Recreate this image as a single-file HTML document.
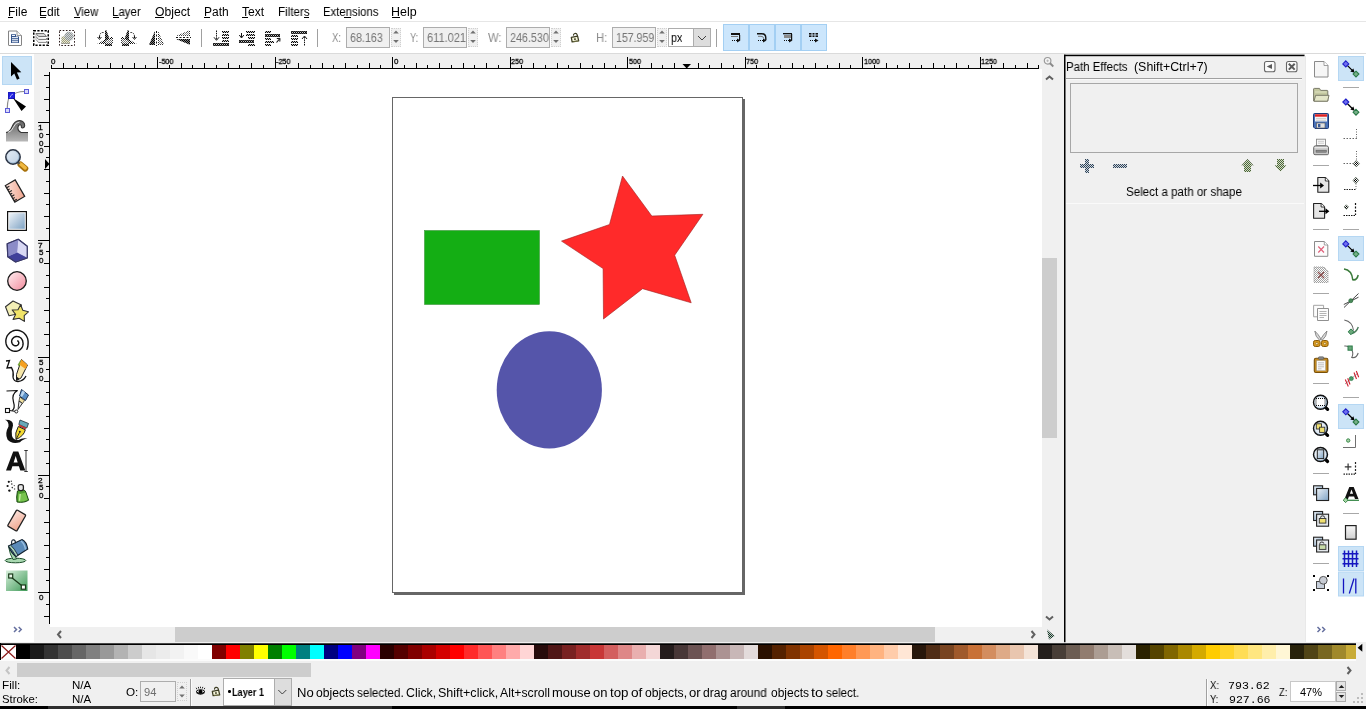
<!DOCTYPE html>
<html><head><meta charset="utf-8"><title>Inkscape</title><style>
html,body{margin:0;padding:0;}
body{width:1366px;height:709px;overflow:hidden;position:relative;background:#f0f0f0;font-family:"Liberation Sans",sans-serif;font-size:12px;color:#000;}
.a{position:absolute;box-sizing:border-box;}
.t{position:absolute;white-space:pre;display:inline-block;transform-origin:0 0;will-change:transform;}
u{text-decoration:none;border-bottom:1px solid #000;padding-bottom:0px;}
svg{position:absolute;left:0;top:0;}
</style></head>
<body>
<div class="a " style="left:0px;top:0px;width:1366px;height:54px;background:#ffffff;"></div>
<div class="a " style="left:0px;top:21px;width:1366px;height:1px;background:#e6e6e6;"></div>
<div class="a " style="left:0px;top:53px;width:1366px;height:1px;background:#dadada;"></div>
<div class="a " style="left:8px;top:17px;width:5px;height:1px;background:#000;"></div>
<div class="a " style="left:40px;top:17px;width:6px;height:1px;background:#000;"></div>
<div class="a " style="left:74px;top:17px;width:6px;height:1px;background:#000;"></div>
<div class="a " style="left:113px;top:17px;width:6px;height:1px;background:#000;"></div>
<div class="a " style="left:155px;top:17px;width:9px;height:1px;background:#000;"></div>
<div class="a " style="left:204px;top:17px;width:6px;height:1px;background:#000;"></div>
<div class="a " style="left:242px;top:17px;width:6px;height:1px;background:#000;"></div>
<div class="a " style="left:304px;top:17px;width:5px;height:1px;background:#000;"></div>
<div class="a " style="left:344px;top:17px;width:7px;height:1px;background:#000;"></div>
<div class="a " style="left:392px;top:17px;width:8px;height:1px;background:#000;"></div>
<div class="a " style="left:85px;top:29px;width:1px;height:18px;background:#a0a0a0;"></div>
<div class="a " style="left:201px;top:29px;width:1px;height:18px;background:#a0a0a0;"></div>
<div class="a " style="left:317px;top:29px;width:1px;height:18px;background:#a0a0a0;"></div>
<div class="a " style="left:716px;top:29px;width:1px;height:18px;background:#a0a0a0;"></div>
<div class="a " style="left:346px;top:27px;width:44px;height:21px;background:#f0f0f0;border:1px solid #adadad;"></div>
<div class="a " style="left:391px;top:28px;width:10px;height:19px;background:#f0f0f0;border:1px dotted #d0d0d0;"></div>
<div class="a " style="left:423px;top:27px;width:44px;height:21px;background:#f0f0f0;border:1px solid #adadad;"></div>
<div class="a " style="left:468px;top:28px;width:10px;height:19px;background:#f0f0f0;border:1px dotted #d0d0d0;"></div>
<div class="a " style="left:506px;top:27px;width:44px;height:21px;background:#f0f0f0;border:1px solid #adadad;"></div>
<div class="a " style="left:551px;top:28px;width:10px;height:19px;background:#f0f0f0;border:1px dotted #d0d0d0;"></div>
<div class="a " style="left:612px;top:27px;width:44px;height:21px;background:#f0f0f0;border:1px solid #adadad;"></div>
<div class="a " style="left:657px;top:28px;width:10px;height:19px;background:#f0f0f0;border:1px dotted #d0d0d0;"></div>
<div class="a " style="left:668px;top:28px;width:43px;height:19px;background:#fff;border:1px solid #adadad;"></div>
<div class="a " style="left:693px;top:28px;width:18px;height:19px;background:#dddddd;border:1px solid #adadad;"></div>
<div class="a " style="left:723px;top:24px;width:26px;height:27px;background:#cce6fc;border:1px solid #a3cff3;"></div>
<div class="a " style="left:749px;top:24px;width:26px;height:27px;background:#cce6fc;border:1px solid #a3cff3;"></div>
<div class="a " style="left:775px;top:24px;width:26px;height:27px;background:#cce6fc;border:1px solid #a3cff3;"></div>
<div class="a " style="left:801px;top:24px;width:26px;height:27px;background:#cce6fc;border:1px solid #a3cff3;"></div>
<div class="a " style="left:0px;top:54px;width:34px;height:588px;background:#ffffff;"></div>
<div class="a " style="left:2px;top:56px;width:30px;height:29px;background:#cce4f7;border:1px solid #b5d7f3;"></div>
<div class="a " style="left:50px;top:69px;width:992px;height:558px;background:#ffffff;"></div>
<div class="a " style="left:394px;top:99px;width:351px;height:496px;background:#666;"></div>
<div class="a " style="left:392px;top:97px;width:351px;height:496px;background:#ffffff;border:1px solid #666;"></div>
<div class="a " style="left:175px;top:627px;width:760px;height:15px;background:#cdcdcd;"></div>
<div class="a " style="left:1042px;top:258px;width:15px;height:180px;background:#cdcdcd;"></div>
<div class="a " style="left:1066px;top:78px;width:236px;height:1px;background:#a0a0a0;"></div>
<div class="a " style="left:1066px;top:79px;width:236px;height:1px;background:#fafafa;"></div>
<div class="a " style="left:1070px;top:83px;width:228px;height:70px;background:#f0f0f0;border:1px solid #a7a7a7;"></div>
<div class="a " style="left:1066px;top:203px;width:238px;height:1px;background:#fafafa;"></div>
<div class="a " style="left:1305px;top:54px;width:61px;height:588px;background:#ffffff;"></div>
<div class="a " style="left:1305px;top:56px;width:1px;height:586px;background:#e9e9e9;"></div>
<div class="a " style="left:0px;top:643px;width:1356px;height:2px;background:#f0f0f0;"></div>
<div class="a " style="left:16px;top:645px;width:1340px;height:14px;background:linear-gradient(to right,#000000 0px 14px,#1a1a1a 14px 28px,#333333 28px 42px,#4d4d4d 42px 56px,#666666 56px 70px,#808080 70px 84px,#999999 84px 98px,#b3b3b3 98px 112px,#cccccc 112px 126px,#e6e6e6 126px 140px,#ececec 140px 154px,#f2f2f2 154px 168px,#f9f9f9 168px 182px,#ffffff 182px 196px,#800000 196px 210px,#ff0000 210px 224px,#808000 224px 238px,#ffff00 238px 252px,#008000 252px 266px,#00ff00 266px 280px,#008080 280px 294px,#00ffff 294px 308px,#000080 308px 322px,#0000ff 322px 336px,#800080 336px 350px,#ff00ff 350px 364px,#2b0000 364px 378px,#550000 378px 392px,#800000 392px 406px,#aa0000 406px 420px,#d40000 420px 434px,#ff0000 434px 448px,#ff2a2a 448px 462px,#ff5555 462px 476px,#ff8080 476px 490px,#ffaaaa 490px 504px,#ffd5d5 504px 518px,#280b0b 518px 532px,#501616 532px 546px,#782121 546px 560px,#a02c2c 560px 574px,#c83737 574px 588px,#d35f5f 588px 602px,#de8787 602px 616px,#e9afaf 616px 630px,#f4d7d7 630px 644px,#241c1c 644px 658px,#483737 658px 672px,#6c5353 672px 686px,#916f6f 686px 700px,#ac9393 700px 714px,#c8b7b7 714px 728px,#e3dbdb 728px 742px,#2b1100 742px 756px,#552200 756px 770px,#803300 770px 784px,#aa4400 784px 798px,#d45500 798px 812px,#ff6600 812px 826px,#ff7f2a 826px 840px,#ff9955 840px 854px,#ffb380 854px 868px,#ffccaa 868px 882px,#ffe6d5 882px 896px,#28170b 896px 910px,#502d16 910px 924px,#784421 924px 938px,#a05a2c 938px 952px,#c87137 952px 966px,#d38d5f 966px 980px,#deaa87 980px 994px,#e9c6af 994px 1008px,#f4e3d7 1008px 1022px,#241f1c 1022px 1036px,#483e37 1036px 1050px,#6c5d53 1050px 1064px,#917c6f 1064px 1078px,#ac9d93 1078px 1092px,#c8beb7 1092px 1106px,#e3dedb 1106px 1120px,#2b2200 1120px 1134px,#554400 1134px 1148px,#806600 1148px 1162px,#aa8800 1162px 1176px,#d4aa00 1176px 1190px,#ffcc00 1190px 1204px,#ffd42a 1204px 1218px,#ffdd55 1218px 1232px,#ffe680 1232px 1246px,#ffeeaa 1246px 1260px,#fff6d5 1260px 1274px,#28220b 1274px 1288px,#504416 1288px 1302px,#786721 1302px 1316px,#a0892c 1316px 1330px,#c8ab37 1330px 1340px);"></div>
<div class="a " style="left:0px;top:659px;width:1356px;height:2px;background:#fbfbfb;"></div>
<div class="a " style="left:1px;top:645px;width:15px;height:14px;background:#ffffff;"></div>
<div class="a " style="left:0px;top:643px;width:1px;height:17px;background:#000;"></div>
<div class="a " style="left:17px;top:663px;width:294px;height:14px;background:#cdcdcd;"></div>
<div class="a " style="left:140px;top:681px;width:36px;height:21px;background:#f0f0f0;border:1px solid #adadad;"></div>
<div class="a " style="left:177px;top:682px;width:10px;height:19px;background:#f0f0f0;border:1px dotted #d0d0d0;"></div>
<div class="a " style="left:190px;top:679px;width:1px;height:27px;background:#a0a0a0;"></div>
<div class="a " style="left:191px;top:679px;width:1px;height:27px;background:#fcfcfc;"></div>
<div class="a " style="left:223px;top:678px;width:69px;height:28px;background:#fff;border:1px solid #adadad;"></div>
<div class="a " style="left:274px;top:678px;width:18px;height:28px;background:#dddddd;border:1px solid #adadad;"></div>
<div class="a " style="left:228px;top:690px;width:3px;height:3px;background:#000;border-radius:1.2px;"></div>
<div class="a " style="left:1206px;top:679px;width:1px;height:27px;background:#a0a0a0;"></div>
<div class="a " style="left:1207px;top:679px;width:1px;height:27px;background:#fcfcfc;"></div>
<div class="a " style="left:1290px;top:681px;width:46px;height:21px;background:#fff;border:1px solid #c8c8c8;"></div>
<div class="a " style="left:1336px;top:681px;width:10px;height:10px;background:#e4e4e4;border:1px solid #adadad;"></div>
<div class="a " style="left:1336px;top:692px;width:10px;height:10px;background:#e4e4e4;border:1px solid #adadad;"></div>
<div class="a " style="left:0px;top:706px;width:1366px;height:3px;background:#000;"></div>
<div class="a " style="left:48px;top:706px;width:344px;height:3px;background:#2e2e2e;"></div>
<div class="a " style="left:737px;top:706px;width:48px;height:3px;background:#2e2e2e;"></div>
<span class="t" style="left:7.51px;top:4.34px;line-height:16px;font-size:12px;color:#000;transform:scaleX(0.9854);">File</span>
<span class="t" style="left:39.41px;top:4.34px;line-height:16px;font-size:12px;color:#000;transform:scaleX(0.9927);">Edit</span>
<span class="t" style="left:74.40px;top:4.34px;line-height:16px;font-size:12px;color:#000;transform:scaleX(0.9370);">View</span>
<span class="t" style="left:112.34px;top:4.34px;line-height:16px;font-size:12px;color:#000;transform:scaleX(0.9578);">Layer</span>
<span class="t" style="left:154.89px;top:4.34px;line-height:16px;font-size:12px;color:#000;transform:scaleX(1.0132);">Object</span>
<span class="t" style="left:203.60px;top:4.34px;line-height:16px;font-size:12px;color:#000;transform:scaleX(0.9951);">Path</span>
<span class="t" style="left:242.00px;top:4.34px;line-height:16px;font-size:12px;color:#000;transform:scaleX(1.0058);">Text</span>
<span class="t" style="left:278.03px;top:4.34px;line-height:16px;font-size:12px;color:#000;transform:scaleX(0.9660);">Filters</span>
<span class="t" style="left:322.85px;top:4.34px;line-height:16px;font-size:12px;color:#000;transform:scaleX(0.9443);">Extensions</span>
<span class="t" style="left:391.47px;top:4.34px;line-height:16px;font-size:12px;color:#000;transform:scaleX(1.0384);">Help</span>
<span class="t" style="left:332.24px;top:30.14px;line-height:16px;font-size:12px;color:#8c8c8c;transform:scaleX(0.7918);">X:</span>
<span class="t" style="left:349.86px;top:30.14px;line-height:16px;font-size:12px;color:#757575;transform:scaleX(0.8953);">68.163</span>
<span class="t" style="left:409.85px;top:30.14px;line-height:16px;font-size:12px;color:#8c8c8c;transform:scaleX(0.7732);">Y:</span>
<span class="t" style="left:426.65px;top:30.14px;line-height:16px;font-size:12px;color:#757575;transform:scaleX(0.9174);">611.021</span>
<span class="t" style="left:487.50px;top:30.14px;line-height:16px;font-size:12px;color:#8c8c8c;transform:scaleX(0.9396);">W:</span>
<span class="t" style="left:510.06px;top:30.14px;line-height:16px;font-size:12px;color:#757575;transform:scaleX(0.8962);">246.530</span>
<span class="t" style="left:595.86px;top:30.14px;line-height:16px;font-size:12px;color:#8c8c8c;transform:scaleX(0.9338);">H:</span>
<span class="t" style="left:616.11px;top:30.14px;line-height:16px;font-size:12px;color:#757575;transform:scaleX(0.8809);">157.959</span>
<span class="t" style="left:671.48px;top:30.14px;line-height:16px;font-size:12px;color:#000;transform:scaleX(0.8843);">px</span>
<span class="t" style="left:1066.44px;top:59.24px;line-height:16px;font-size:12px;color:#000;transform:scaleX(0.9544);">Path Effects</span>
<span class="t" style="left:1134.08px;top:59.24px;line-height:16px;font-size:12px;color:#000;transform:scaleX(1.0320);">(Shift+Ctrl+7)</span>
<span class="t" style="left:1125.82px;top:183.54px;line-height:16px;font-size:12px;color:#000;transform:scaleX(0.9647);">Select a path or shape</span>
<span class="t" style="left:1.94px;top:678.39px;line-height:15px;font-size:11px;color:#000;transform:scaleX(1.0688);">Fill:</span>
<span class="t" style="left:2.38px;top:692.49px;line-height:15px;font-size:11px;color:#000;transform:scaleX(1.0302);">Stroke:</span>
<span class="t" style="left:71.56px;top:678.39px;line-height:15px;font-size:11px;color:#000;transform:scaleX(1.0457);">N/A</span>
<span class="t" style="left:71.56px;top:692.49px;line-height:15px;font-size:11px;color:#000;transform:scaleX(1.0457);">N/A</span>
<span class="t" style="left:126.07px;top:684.99px;line-height:15px;font-size:11px;color:#000;transform:scaleX(1.0634);">O:</span>
<span class="t" style="left:143.79px;top:684.99px;line-height:15px;font-size:11px;color:#6d6d6d;transform:scaleX(1.0160);">94</span>
<span class="t" style="left:232.25px;top:685.63px;line-height:14px;font-size:10px;color:#000;transform:scaleX(0.9133);font-weight:bold;">Layer 1</span>
<span class="t" style="left:296.92px;top:684.54px;line-height:16px;font-size:12px;color:#000;transform:scaleX(1.0884);">No</span>
<span class="t" style="left:315.99px;top:684.54px;line-height:16px;font-size:12px;color:#000;transform:scaleX(1.0129);">objects</span>
<span class="t" style="left:357.21px;top:684.54px;line-height:16px;font-size:12px;color:#000;transform:scaleX(0.9723);">selected.</span>
<span class="t" style="left:405.68px;top:684.54px;line-height:16px;font-size:12px;color:#000;transform:scaleX(1.0290);">Click,</span>
<span class="t" style="left:437.68px;top:684.54px;line-height:16px;font-size:12px;color:#000;transform:scaleX(1.0436);">Shift+click,</span>
<span class="t" style="left:500.20px;top:684.54px;line-height:16px;font-size:12px;color:#000;transform:scaleX(1.0197);">Alt+scroll</span>
<span class="t" style="left:552.05px;top:684.54px;line-height:16px;font-size:12px;color:#000;transform:scaleX(1.0762);">mouse</span>
<span class="t" style="left:593.16px;top:684.54px;line-height:16px;font-size:12px;color:#000;transform:scaleX(1.0850);">on</span>
<span class="t" style="left:610.09px;top:684.54px;line-height:16px;font-size:12px;color:#000;transform:scaleX(1.1113);">top</span>
<span class="t" style="left:630.93px;top:684.54px;line-height:16px;font-size:12px;color:#000;transform:scaleX(1.1385);">of</span>
<span class="t" style="left:645.29px;top:684.54px;line-height:16px;font-size:12px;color:#000;transform:scaleX(1.0170);">objects,</span>
<span class="t" style="left:689.15px;top:684.54px;line-height:16px;font-size:12px;color:#000;transform:scaleX(1.0929);">or</span>
<span class="t" style="left:703.49px;top:684.54px;line-height:16px;font-size:12px;color:#000;transform:scaleX(1.0113);">drag</span>
<span class="t" style="left:729.81px;top:684.54px;line-height:16px;font-size:12px;color:#000;transform:scaleX(0.9836);">around</span>
<span class="t" style="left:771.11px;top:684.54px;line-height:16px;font-size:12px;color:#000;transform:scaleX(0.9886);">objects</span>
<span class="t" style="left:811.08px;top:684.54px;line-height:16px;font-size:12px;color:#000;transform:scaleX(1.2084);">to</span>
<span class="t" style="left:826.01px;top:684.54px;line-height:16px;font-size:12px;color:#000;transform:scaleX(0.9566);">select.</span>
<span class="t" style="left:1210.11px;top:679.03px;line-height:14px;font-size:10px;color:#000;transform:scaleX(0.9439);">X:</span>
<span class="t" style="left:1210.11px;top:692.93px;line-height:14px;font-size:10px;color:#000;transform:scaleX(0.9337);">Y:</span>
<span class="t" style="left:1228.39px;top:680.03px;line-height:14px;font-size:10px;color:#000;transform:scaleX(1.1588);font-family:'Liberation Mono';">793.62</span>
<span class="t" style="left:1228.51px;top:693.74px;line-height:14px;font-size:10px;color:#000;transform:scaleX(1.1521);font-family:'Liberation Mono';">927.66</span>
<span class="t" style="left:1279.34px;top:684.99px;line-height:15px;font-size:11px;color:#000;transform:scaleX(0.8569);">Z:</span>
<span class="t" style="left:1299.70px;top:684.99px;line-height:15px;font-size:11px;color:#000;transform:scaleX(0.9797);">47%</span>
<span class="t" style="left:158.93px;top:56.23px;line-height:12px;font-size:8px;color:#000;transform:scaleX(0.9054);-webkit-text-stroke:0.3px #000;">-500</span>
<span class="t" style="left:276.43px;top:56.23px;line-height:12px;font-size:8px;color:#000;transform:scaleX(0.9054);-webkit-text-stroke:0.3px #000;">-250</span>
<span class="t" style="left:393.91px;top:56.23px;line-height:12px;font-size:8px;color:#000;transform:scaleX(0.9744);-webkit-text-stroke:0.3px #000;">0</span>
<span class="t" style="left:511.34px;top:56.23px;line-height:12px;font-size:8px;color:#000;transform:scaleX(0.8977);-webkit-text-stroke:0.3px #000;">250</span>
<span class="t" style="left:628.93px;top:56.23px;line-height:12px;font-size:8px;color:#000;transform:scaleX(0.8907);-webkit-text-stroke:0.3px #000;">500</span>
<span class="t" style="left:746.34px;top:56.23px;line-height:12px;font-size:8px;color:#000;transform:scaleX(0.8977);-webkit-text-stroke:0.3px #000;">750</span>
<span class="t" style="left:863.66px;top:56.23px;line-height:12px;font-size:8px;color:#000;transform:scaleX(0.8969);-webkit-text-stroke:0.3px #000;">1000</span>
<span class="t" style="left:981.16px;top:56.23px;line-height:12px;font-size:8px;color:#000;transform:scaleX(0.8969);-webkit-text-stroke:0.3px #000;">1250</span>
<span class="t" style="left:51.21px;top:56.23px;line-height:12px;font-size:8px;color:#000;transform:scaleX(0.9744);-webkit-text-stroke:0.3px #000;">0</span>
<span class="t" style="left:38.15px;top:122.03px;line-height:12px;font-size:8px;color:#000;transform:scaleX(1.0857);-webkit-text-stroke:0.3px #000;">1</span>
<span class="t" style="left:38.51px;top:129.83px;line-height:12px;font-size:8px;color:#000;transform:scaleX(0.9744);-webkit-text-stroke:0.3px #000;">0</span>
<span class="t" style="left:38.51px;top:137.63px;line-height:12px;font-size:8px;color:#000;transform:scaleX(0.9744);-webkit-text-stroke:0.3px #000;">0</span>
<span class="t" style="left:38.51px;top:145.43px;line-height:12px;font-size:8px;color:#000;transform:scaleX(0.9744);-webkit-text-stroke:0.3px #000;">0</span>
<span class="t" style="left:38.39px;top:239.53px;line-height:12px;font-size:8px;color:#000;transform:scaleX(1.0270);-webkit-text-stroke:0.3px #000;">7</span>
<span class="t" style="left:38.51px;top:247.33px;line-height:12px;font-size:8px;color:#000;transform:scaleX(0.9744);-webkit-text-stroke:0.3px #000;">5</span>
<span class="t" style="left:38.51px;top:255.13px;line-height:12px;font-size:8px;color:#000;transform:scaleX(0.9744);-webkit-text-stroke:0.3px #000;">0</span>
<span class="t" style="left:38.51px;top:357.03px;line-height:12px;font-size:8px;color:#000;transform:scaleX(0.9744);-webkit-text-stroke:0.3px #000;">5</span>
<span class="t" style="left:38.51px;top:364.83px;line-height:12px;font-size:8px;color:#000;transform:scaleX(0.9744);-webkit-text-stroke:0.3px #000;">0</span>
<span class="t" style="left:38.51px;top:372.63px;line-height:12px;font-size:8px;color:#000;transform:scaleX(0.9744);-webkit-text-stroke:0.3px #000;">0</span>
<span class="t" style="left:38.39px;top:474.53px;line-height:12px;font-size:8px;color:#000;transform:scaleX(1.0270);-webkit-text-stroke:0.3px #000;">2</span>
<span class="t" style="left:38.51px;top:482.33px;line-height:12px;font-size:8px;color:#000;transform:scaleX(0.9744);-webkit-text-stroke:0.3px #000;">5</span>
<span class="t" style="left:38.51px;top:490.13px;line-height:12px;font-size:8px;color:#000;transform:scaleX(0.9744);-webkit-text-stroke:0.3px #000;">0</span>
<span class="t" style="left:38.51px;top:592.03px;line-height:12px;font-size:8px;color:#000;transform:scaleX(0.9744);-webkit-text-stroke:0.3px #000;">0</span>
<svg width="1366" height="709" viewBox="0 0 1366 709">
<defs><pattern id="d" width="2" height="2" patternUnits="userSpaceOnUse"><rect x="0" y="0" width="1" height="1" fill="#000"/><rect x="1" y="1" width="1" height="1" fill="#000"/></pattern>
<pattern id="dg" width="2" height="2" patternUnits="userSpaceOnUse"><rect x="0" y="0" width="1" height="1" fill="#7a7a7a"/><rect x="1" y="1" width="1" height="1" fill="#7a7a7a"/></pattern>
<pattern id="dy" width="2" height="2" patternUnits="userSpaceOnUse"><rect x="0" y="0" width="1" height="1" fill="#6a6a50"/><rect x="1" y="1" width="1" height="1" fill="#6a6a50"/></pattern>
<pattern id="dgr" width="2" height="2" patternUnits="userSpaceOnUse"><rect x="0" y="0" width="1" height="1" fill="#5a8040"/><rect x="1" y="1" width="1" height="1" fill="#5a8040"/></pattern>
<pattern id="dbl" width="2" height="2" patternUnits="userSpaceOnUse"><rect x="0" y="0" width="1" height="1" fill="#30506e"/><rect x="1" y="1" width="1" height="1" fill="#30506e"/></pattern>
<linearGradient id="gBlue" x1="0" y1="0" x2="1" y2="1"><stop offset="0" stop-color="#eef3f8"/><stop offset="1" stop-color="#7fa3c4"/></linearGradient>
<linearGradient id="gPink" x1="0" y1="0" x2="1" y2="1"><stop offset="0" stop-color="#fff0f2"/><stop offset="1" stop-color="#f28a9c"/></linearGradient>
<linearGradient id="gGray" x1="0" y1="0" x2="0" y2="1"><stop offset="0" stop-color="#f8f8f8"/><stop offset="1" stop-color="#d0d0d0"/></linearGradient>
<linearGradient id="gGreen" x1="0" y1="0" x2="1" y2="1"><stop offset="0" stop-color="#d8efdc"/><stop offset="1" stop-color="#3f9a58"/></linearGradient>
<linearGradient id="gSalmon" x1="0" y1="0" x2="1" y2="1"><stop offset="0" stop-color="#fbe3dc"/><stop offset="1" stop-color="#f0a48c"/></linearGradient>
<linearGradient id="gWave" x1="0" y1="0" x2="0" y2="1"><stop offset="0" stop-color="#606060"/><stop offset="1" stop-color="#b8b8b8"/></linearGradient>
<linearGradient id="gGold" x1="0" y1="0" x2="1" y2="0"><stop offset="0" stop-color="#f5c860"/><stop offset="1" stop-color="#c88a10"/></linearGradient>
</defs>
<rect x="424.5" y="230.5" width="115" height="74" fill="#14ae14" stroke="#2d8a2d" stroke-width="0.5"/>
<polygon points="622.5,176 651.8,216 702.9,214.3 674.7,255.2 691.2,302.8 642.6,288.7 603.5,319 603.1,268.6 561.5,241.1 609.5,224.5" fill="#ff2a2a" stroke="#a02020" stroke-width="0.6"/>
<ellipse cx="549.3" cy="389.9" rx="52.6" ry="58.6" fill="#5555aa"/>
<rect x="51" y="68" width="988" height="1" fill="#000"/><rect x="51" y="65" width="1" height="3" fill="#000"/><rect x="63" y="63" width="1" height="5" fill="#000"/><rect x="75" y="65" width="1" height="3" fill="#000"/><rect x="87" y="63" width="1" height="5" fill="#000"/><rect x="98" y="65" width="1" height="3" fill="#000"/><rect x="110" y="63" width="1" height="5" fill="#000"/><rect x="122" y="65" width="1" height="3" fill="#000"/><rect x="134" y="63" width="1" height="5" fill="#000"/><rect x="145" y="65" width="1" height="3" fill="#000"/><rect x="157" y="57" width="1" height="11" fill="#000"/><rect x="169" y="65" width="1" height="3" fill="#000"/><rect x="181" y="63" width="1" height="5" fill="#000"/><rect x="192" y="65" width="1" height="3" fill="#000"/><rect x="204" y="63" width="1" height="5" fill="#000"/><rect x="216" y="65" width="1" height="3" fill="#000"/><rect x="228" y="63" width="1" height="5" fill="#000"/><rect x="239" y="65" width="1" height="3" fill="#000"/><rect x="251" y="63" width="1" height="5" fill="#000"/><rect x="263" y="65" width="1" height="3" fill="#000"/><rect x="275" y="57" width="1" height="11" fill="#000"/><rect x="286" y="65" width="1" height="3" fill="#000"/><rect x="298" y="63" width="1" height="5" fill="#000"/><rect x="310" y="65" width="1" height="3" fill="#000"/><rect x="322" y="63" width="1" height="5" fill="#000"/><rect x="333" y="65" width="1" height="3" fill="#000"/><rect x="345" y="63" width="1" height="5" fill="#000"/><rect x="357" y="65" width="1" height="3" fill="#000"/><rect x="369" y="63" width="1" height="5" fill="#000"/><rect x="380" y="65" width="1" height="3" fill="#000"/><rect x="392" y="57" width="1" height="11" fill="#000"/><rect x="404" y="65" width="1" height="3" fill="#000"/><rect x="416" y="63" width="1" height="5" fill="#000"/><rect x="427" y="65" width="1" height="3" fill="#000"/><rect x="439" y="63" width="1" height="5" fill="#000"/><rect x="451" y="65" width="1" height="3" fill="#000"/><rect x="463" y="63" width="1" height="5" fill="#000"/><rect x="474" y="65" width="1" height="3" fill="#000"/><rect x="486" y="63" width="1" height="5" fill="#000"/><rect x="498" y="65" width="1" height="3" fill="#000"/><rect x="510" y="57" width="1" height="11" fill="#000"/><rect x="521" y="65" width="1" height="3" fill="#000"/><rect x="533" y="63" width="1" height="5" fill="#000"/><rect x="545" y="65" width="1" height="3" fill="#000"/><rect x="557" y="63" width="1" height="5" fill="#000"/><rect x="568" y="65" width="1" height="3" fill="#000"/><rect x="580" y="63" width="1" height="5" fill="#000"/><rect x="592" y="65" width="1" height="3" fill="#000"/><rect x="604" y="63" width="1" height="5" fill="#000"/><rect x="615" y="65" width="1" height="3" fill="#000"/><rect x="627" y="57" width="1" height="11" fill="#000"/><rect x="639" y="65" width="1" height="3" fill="#000"/><rect x="651" y="63" width="1" height="5" fill="#000"/><rect x="662" y="65" width="1" height="3" fill="#000"/><rect x="674" y="63" width="1" height="5" fill="#000"/><rect x="686" y="65" width="1" height="3" fill="#000"/><rect x="698" y="63" width="1" height="5" fill="#000"/><rect x="709" y="65" width="1" height="3" fill="#000"/><rect x="721" y="63" width="1" height="5" fill="#000"/><rect x="733" y="65" width="1" height="3" fill="#000"/><rect x="745" y="57" width="1" height="11" fill="#000"/><rect x="756" y="65" width="1" height="3" fill="#000"/><rect x="768" y="63" width="1" height="5" fill="#000"/><rect x="780" y="65" width="1" height="3" fill="#000"/><rect x="792" y="63" width="1" height="5" fill="#000"/><rect x="803" y="65" width="1" height="3" fill="#000"/><rect x="815" y="63" width="1" height="5" fill="#000"/><rect x="827" y="65" width="1" height="3" fill="#000"/><rect x="839" y="63" width="1" height="5" fill="#000"/><rect x="850" y="65" width="1" height="3" fill="#000"/><rect x="862" y="57" width="1" height="11" fill="#000"/><rect x="874" y="65" width="1" height="3" fill="#000"/><rect x="886" y="63" width="1" height="5" fill="#000"/><rect x="897" y="65" width="1" height="3" fill="#000"/><rect x="909" y="63" width="1" height="5" fill="#000"/><rect x="921" y="65" width="1" height="3" fill="#000"/><rect x="933" y="63" width="1" height="5" fill="#000"/><rect x="944" y="65" width="1" height="3" fill="#000"/><rect x="956" y="63" width="1" height="5" fill="#000"/><rect x="968" y="65" width="1" height="3" fill="#000"/><rect x="980" y="57" width="1" height="11" fill="#000"/><rect x="991" y="65" width="1" height="3" fill="#000"/><rect x="1003" y="63" width="1" height="5" fill="#000"/><rect x="1015" y="65" width="1" height="3" fill="#000"/><rect x="1027" y="63" width="1" height="5" fill="#000"/><rect x="1038" y="65" width="1" height="3" fill="#000"/><rect x="49" y="72" width="1" height="552" fill="#000"/><rect x="44" y="75" width="5" height="1" fill="#000"/><rect x="46" y="87" width="3" height="1" fill="#000"/><rect x="44" y="99" width="5" height="1" fill="#000"/><rect x="46" y="110" width="3" height="1" fill="#000"/><rect x="38" y="122" width="11" height="1" fill="#000"/><rect x="46" y="134" width="3" height="1" fill="#000"/><rect x="44" y="146" width="5" height="1" fill="#000"/><rect x="46" y="157" width="3" height="1" fill="#000"/><rect x="44" y="169" width="5" height="1" fill="#000"/><rect x="46" y="181" width="3" height="1" fill="#000"/><rect x="44" y="193" width="5" height="1" fill="#000"/><rect x="46" y="204" width="3" height="1" fill="#000"/><rect x="44" y="216" width="5" height="1" fill="#000"/><rect x="46" y="228" width="3" height="1" fill="#000"/><rect x="38" y="240" width="11" height="1" fill="#000"/><rect x="46" y="251" width="3" height="1" fill="#000"/><rect x="44" y="263" width="5" height="1" fill="#000"/><rect x="46" y="275" width="3" height="1" fill="#000"/><rect x="44" y="287" width="5" height="1" fill="#000"/><rect x="46" y="298" width="3" height="1" fill="#000"/><rect x="44" y="310" width="5" height="1" fill="#000"/><rect x="46" y="322" width="3" height="1" fill="#000"/><rect x="44" y="334" width="5" height="1" fill="#000"/><rect x="46" y="345" width="3" height="1" fill="#000"/><rect x="38" y="357" width="11" height="1" fill="#000"/><rect x="46" y="369" width="3" height="1" fill="#000"/><rect x="44" y="381" width="5" height="1" fill="#000"/><rect x="46" y="392" width="3" height="1" fill="#000"/><rect x="44" y="404" width="5" height="1" fill="#000"/><rect x="46" y="416" width="3" height="1" fill="#000"/><rect x="44" y="428" width="5" height="1" fill="#000"/><rect x="46" y="439" width="3" height="1" fill="#000"/><rect x="44" y="451" width="5" height="1" fill="#000"/><rect x="46" y="463" width="3" height="1" fill="#000"/><rect x="38" y="475" width="11" height="1" fill="#000"/><rect x="46" y="486" width="3" height="1" fill="#000"/><rect x="44" y="498" width="5" height="1" fill="#000"/><rect x="46" y="510" width="3" height="1" fill="#000"/><rect x="44" y="522" width="5" height="1" fill="#000"/><rect x="46" y="533" width="3" height="1" fill="#000"/><rect x="44" y="545" width="5" height="1" fill="#000"/><rect x="46" y="557" width="3" height="1" fill="#000"/><rect x="44" y="569" width="5" height="1" fill="#000"/><rect x="46" y="580" width="3" height="1" fill="#000"/><rect x="38" y="592" width="11" height="1" fill="#000"/><rect x="46" y="604" width="3" height="1" fill="#000"/><rect x="44" y="616" width="5" height="1" fill="#000"/><polygon points="682.5,64 691,64 686.7,68.5" fill="#000"/><polygon points="45,159 45,169 49.5,164" fill="#000"/>
<path d="M61.0,631.0 L58.0,634.5 L61.0,638.0" fill="none" stroke="#606060" stroke-width="2"/>
<path d="M1031.5,631.0 L1034.5,634.5 L1031.5,638.0" fill="none" stroke="#606060" stroke-width="2"/>
<path d="M1046.0,79.5 L1049.5,76.5 L1053.0,79.5" fill="none" stroke="#606060" stroke-width="2"/>
<path d="M1046.0,616.5 L1049.5,619.5 L1053.0,616.5" fill="none" stroke="#606060" stroke-width="2"/>
<path d="M9.5,667.0 L6.5,670.5 L9.5,674.0" fill="none" stroke="#c4c4c4" stroke-width="2"/>
<path d="M1347.5,667.0 L1350.5,670.5 L1347.5,674.0" fill="none" stroke="#606060" stroke-width="2"/>
<path d="M698,36.0 L702,40.0 L706,36.0" fill="none" stroke="#404040" stroke-width="1"/>
<path d="M278.3,690.0 L282.3,694.0 L286.3,690.0" fill="none" stroke="#404040" stroke-width="1"/>
<polygon points="393.2,33.5 398.8,33.5 396,30.5" fill="#707070"/>
<polygon points="393.2,40.0 398.8,40.0 396,43.0" fill="#707070"/>
<polygon points="470.2,33.5 475.8,33.5 473,30.5" fill="#707070"/>
<polygon points="470.2,40.0 475.8,40.0 473,43.0" fill="#707070"/>
<polygon points="553.2,33.5 558.8,33.5 556,30.5" fill="#707070"/>
<polygon points="553.2,40.0 558.8,40.0 556,43.0" fill="#707070"/>
<polygon points="659.2,33.5 664.8,33.5 662,30.5" fill="#707070"/>
<polygon points="659.2,40.0 664.8,40.0 662,43.0" fill="#707070"/>
<polygon points="179.2,688.5 184.8,688.5 182,685.5" fill="#707070"/>
<polygon points="179.2,694.5 184.8,694.5 182,697.5" fill="#707070"/>
<polygon points="1338.7,688.0 1344.3,688.0 1341.5,685.0" fill="#202020"/>
<polygon points="1338.7,695.0 1344.3,695.0 1341.5,698.0" fill="#202020"/>
<path d="M1.5,645.5 L15.5,658.5 M15.5,645.5 L1.5,658.5" stroke="#8b1a1a" stroke-width="1.2" fill="none"/>
<polygon points="1362.3,643.8 1362.3,651.8 1357.6,647.8" fill="#000"/>
<rect x="0" y="643.3" width="1356" height="1.7" fill="#000"/>
<g transform="translate(7,30)" ><path d="M1.5,1 L10,1 L14.5,5.5 L14.5,15 Q14.5,15.5 14,15.5 L2,15.5 Q1.5,15.5 1.5,15 Z" fill="#fdfdfe" stroke="#858585" stroke-width="1"/>
<path d="M10,1 L10,5.5 L14.5,5.5" fill="#f4f4f4" stroke="#858585" stroke-width="0.8"/>
<path d="M4,4.2 L9,4.2 L9,6.4 L12,6.4 L12,13 L4,13 Z" fill="#34548a"/>
<rect x="5" y="5" width="3" height="1" fill="#f4f8ff"/><rect x="5" y="7.1" width="6" height="1.1" fill="#f4f8ff"/><rect x="5" y="9.2" width="6" height="1.1" fill="#f4f8ff"/><rect x="5" y="11.2" width="6" height="1.1" fill="#f4f8ff"/></g>
<g transform="translate(33,30)" ><rect x="0.75" y="0.75" width="14.5" height="14.5" fill="none" stroke="#000" stroke-width="1.5" stroke-dasharray="2.2,1.4"/>
<path d="M3,3.5 L11,3.5 L13.5,6.5 L5.5,6.5 Z" fill="#d8d8d8" stroke="#555" stroke-width="0.8"/>
<path d="M3,6.5 L5.5,9.5 L13.5,9.5 L13.5,8" fill="#eee" stroke="#666" stroke-width="0.8"/>
<path d="M3,9.5 L5.5,12.5 L13.5,12.5 L13.5,11" fill="#eee" stroke="#777" stroke-width="0.8"/>
<path d="M3,3.5 L3,6.5 M3,6.8 L3,9.5" stroke="#888" stroke-width="0.6"/></g>
<g transform="translate(59,30)" ><rect x="0.5" y="0.5" width="15" height="15" fill="none" stroke="#2a1a1a" stroke-width="1" stroke-dasharray="1.6,1.6"/>
<circle cx="10" cy="6.3" r="4.6" fill="url(#dg)"/><circle cx="10" cy="6.3" r="4.6" fill="#a4aeb0" opacity="0.5"/>
<path d="M2.5,7.5 Q2.5,6.5 3.5,6.5 L5.5,6.5 Q6,10.5 11,11 L11,12.5 Q11,13.5 10,13.5 L2.5,13.5 Z" fill="url(#dy)"/>
<path d="M2.5,7.5 Q2.5,6.5 3.5,6.5 L5.5,6.5 Q6,10.5 11,11 L11,12.5 Q11,13.5 10,13.5 L2.5,13.5 Z" fill="#d0d0a8" opacity="0.5"/>
<path d="M2.5,13.5 L11,13.5" stroke="#444" stroke-width="0.8" stroke-dasharray="1,1"/></g>
<g transform="translate(96,30)">
<path d="M9,0.3 L10.3,0.3 L13.3,8.5 L9,11 Z" fill="url(#d)"/><path d="M9,0.3 L10.3,0.3 L13.3,8.5 L9,11 Z" fill="#000" opacity="0.45"/>
<path d="M8,10 L13,8.5 L15.2,6.8 L17,7.5 L17,14 L9,14 L1,13.8 L4.5,12.2 Z" fill="url(#d)"/>
<path d="M9.5,10.5 L16.5,8.5 L16.5,13.5 L9.5,13.5 Z" fill="#fff" opacity="0.45"/>
<rect x="9" y="14" width="7" height="2" fill="url(#d)"/><rect x="9" y="14" width="7" height="2" fill="#000" opacity="0.4"/>
<path d="M7.5,2.5 Q3.5,2.3 3.5,7" fill="none" stroke="#111" stroke-width="1" stroke-dasharray="1.6,1"/>
<path d="M1.2,7 L5.8,7 L3.5,9.8 Z" fill="url(#d)"/><path d="M1.2,7 L5.8,7 L3.5,9.8 Z" fill="#000" opacity="0.4"/></g>
<g transform="translate(138,30) scale(-1,1)">
<path d="M9,0.3 L10.3,0.3 L13.3,8.5 L9,11 Z" fill="url(#d)"/><path d="M9,0.3 L10.3,0.3 L13.3,8.5 L9,11 Z" fill="#000" opacity="0.45"/>
<path d="M8,10 L13,8.5 L15.2,6.8 L17,7.5 L17,14 L9,14 L1,13.8 L4.5,12.2 Z" fill="url(#d)"/>
<path d="M9.5,10.5 L16.5,8.5 L16.5,13.5 L9.5,13.5 Z" fill="#fff" opacity="0.45"/>
<rect x="9" y="14" width="7" height="2" fill="url(#d)"/><rect x="9" y="14" width="7" height="2" fill="#000" opacity="0.4"/>
<path d="M7.5,2.5 Q3.5,2.3 3.5,7" fill="none" stroke="#111" stroke-width="1" stroke-dasharray="1.6,1"/>
<path d="M1.2,7 L5.8,7 L3.5,9.8 Z" fill="url(#d)"/><path d="M1.2,7 L5.8,7 L3.5,9.8 Z" fill="#000" opacity="0.4"/></g>
<path d="M155,31 L155,45 L149,45 Z" fill="url(#d)"/><path d="M155,31 L155,45 L149,45 Z" fill="#000" opacity="0.5"/>
<path d="M158,31 L158,45 L164,45 Z" fill="url(#d)"/><path d="M158.6,34 L158.6,44.4 L162.8,44.4 Z" fill="#fff" opacity="0.55"/>
<path d="M156.5,31 L156.5,46" stroke="#111" stroke-width="1" stroke-dasharray="2,1.5"/>
<path d="M176,36 L190,36 L190,30.3 Z" fill="url(#d)"/><path d="M178.5,35.4 L189.4,35.4 L189.4,31.3 Z" fill="#fff" opacity="0.55"/>
<path d="M176,39 L190,39 L190,44.7 Z" fill="url(#d)"/><path d="M176,39 L190,39 L190,44.7 Z" fill="#000" opacity="0.5"/>
<path d="M176,37.5 L191,37.5" stroke="#111" stroke-width="1" stroke-dasharray="2,1.5"/>
<g transform="translate(213,30)" ><rect x="9" y="1" width="7" height="2" fill="url(#d)"/><rect x="9" y="1" width="7" height="2" fill="#000" opacity="0.22"/><rect x="9" y="4" width="7" height="2" fill="url(#d)"/><rect x="9" y="4" width="7" height="2" fill="#000" opacity="0.22"/><rect x="9" y="7" width="7" height="2" fill="url(#d)"/><rect x="9" y="7" width="7" height="2" fill="#000" opacity="0.22"/><rect x="9" y="10" width="7" height="2" fill="url(#d)"/><rect x="9" y="10" width="7" height="2" fill="#000" opacity="0.22"/><rect x="0" y="13" width="16" height="3" fill="url(#d)"/><rect x="0" y="13" width="16" height="3" fill="#000" opacity="0.2"/><rect x="0.5" y="13.5" width="15" height="2" fill="none" stroke="#222" stroke-width="0.7"/><path d="M3.5,0.5 L3.5,10" stroke="#111" stroke-width="1" stroke-dasharray="1.5,0.8"/><path d="M1,7.3 L3.5,10.3 L6,7.3" fill="none" stroke="#111" stroke-width="1"/></g>
<g transform="translate(239,30)" ><rect x="7" y="1" width="9" height="2" fill="url(#d)"/><rect x="7" y="1" width="9" height="2" fill="#000" opacity="0.22"/><rect x="7" y="4" width="9" height="2" fill="url(#d)"/><rect x="7" y="4" width="9" height="2" fill="#000" opacity="0.22"/><rect x="9" y="7" width="7" height="2" fill="url(#d)"/><rect x="9" y="7" width="7" height="2" fill="#000" opacity="0.22"/><rect x="9" y="14" width="7" height="2" fill="url(#d)"/><rect x="9" y="14" width="7" height="2" fill="#000" opacity="0.22"/><rect x="0" y="10" width="15" height="3" fill="url(#d)"/><rect x="0" y="10" width="15" height="3" fill="#000" opacity="0.2"/><rect x="0.5" y="10.5" width="14" height="2" fill="none" stroke="#222" stroke-width="0.7"/><path d="M2.5,3 L2.5,7.5" stroke="#111" stroke-width="1"/><path d="M0.3,5 L2.5,8 L4.8,5" fill="none" stroke="#111" stroke-width="1"/></g>
<g transform="translate(265,30)" ><rect x="0" y="1" width="6" height="2" fill="url(#d)"/><rect x="0" y="1" width="6" height="2" fill="#000" opacity="0.22"/><rect x="0" y="8" width="6" height="2" fill="url(#d)"/><rect x="0" y="8" width="6" height="2" fill="#000" opacity="0.22"/><rect x="0" y="14" width="6" height="2" fill="url(#d)"/><rect x="0" y="14" width="6" height="2" fill="#000" opacity="0.22"/><rect x="0" y="11" width="9" height="2" fill="url(#d)"/><rect x="0" y="11" width="9" height="2" fill="#000" opacity="0.22"/><rect x="0" y="4" width="15" height="3" fill="url(#d)"/><rect x="0" y="4" width="15" height="3" fill="#000" opacity="0.2"/><rect x="0.5" y="4.5" width="14" height="2" fill="none" stroke="#222" stroke-width="0.7"/><path d="M11.5,12.5 L14.5,9" stroke="#111" stroke-width="1.1"/><path d="M11.8,8.6 L15,8.3 L14.8,11.6" fill="none" stroke="#111" stroke-width="1"/></g>
<g transform="translate(291,30)" ><rect x="0" y="1" width="16" height="3" fill="url(#d)"/><rect x="0" y="1" width="16" height="3" fill="#000" opacity="0.2"/><rect x="0.5" y="1.5" width="15" height="2" fill="none" stroke="#222" stroke-width="0.7"/><rect x="0" y="5" width="7" height="2" fill="url(#d)"/><rect x="0" y="5" width="7" height="2" fill="#000" opacity="0.22"/><rect x="0" y="8" width="7" height="2" fill="url(#d)"/><rect x="0" y="8" width="7" height="2" fill="#000" opacity="0.22"/><rect x="0" y="11" width="7" height="2" fill="url(#d)"/><rect x="0" y="11" width="7" height="2" fill="#000" opacity="0.22"/><rect x="0" y="14" width="7" height="2" fill="url(#d)"/><rect x="0" y="14" width="7" height="2" fill="#000" opacity="0.22"/><path d="M13.5,15.5 L13.5,6" stroke="#111" stroke-width="1" stroke-dasharray="1.5,0.8"/><path d="M11,9 L13.5,6 L16,9" fill="none" stroke="#111" stroke-width="1"/></g>
<g transform="translate(571,33)" ><path d="M0.3,4.4 L6.6,3.2 L7.7,7.9 L1.1,8.8 Z" fill="#f6f6dc" stroke="#3c3c22" stroke-width="1.25" stroke-linejoin="round"/>
<rect x="3.1" y="5.3" width="1.7" height="1.7" fill="#4a4a30"/>
<path d="M2.5,2.7 Q2.2,1 3.8,0.5 Q5.7,0.2 6.2,1.8 L6.5,3.2" fill="none" stroke="#3c3c22" stroke-width="1.15"/>
<path d="M7.5,8 L2,8.8" stroke="#8a8a50" stroke-width="0.6"/></g>
<g transform="translate(212,686.9)" ><path d="M0.3,4.4 L6.6,3.2 L7.7,7.9 L1.1,8.8 Z" fill="#f6f6dc" stroke="#3c3c22" stroke-width="1.25" stroke-linejoin="round"/>
<rect x="3.1" y="5.3" width="1.7" height="1.7" fill="#4a4a30"/>
<path d="M2.5,2.7 Q2.2,1 3.8,0.5 Q5.7,0.2 6.2,1.8 L6.5,3.2" fill="none" stroke="#3c3c22" stroke-width="1.15"/>
<path d="M7.5,8 L2,8.8" stroke="#8a8a50" stroke-width="0.6"/></g>
<g transform="translate(731,33)" ><rect x="0" y="0" width="9" height="2" fill="#111"/><rect x="0" y="3" width="7" height="1" fill="#777"/><rect x="8" y="2" width="1.2" height="5" fill="#111"/><path d="M1,7.5 L6,7.5" stroke="#111" stroke-width="1" stroke-dasharray="1,1"/><path d="M6,5.5 L9.5,7.5 L6,9.5 Z" fill="#111"/></g>
<g transform="translate(757,33)" ><path d="M0,0.8 L5,0.8 Q8.8,0.8 8.8,5 L8.8,7" fill="none" stroke="#111" stroke-width="1.4"/><path d="M1,3.3 L4,3.3 Q6.5,3.3 6.8,5.5" fill="none" stroke="#777" stroke-width="1"/><path d="M1,7.5 L6,7.5" stroke="#111" stroke-width="1" stroke-dasharray="1,1"/><path d="M6,5.5 L9.5,7.5 L6,9.5 Z" fill="#111"/></g>
<g transform="translate(783,33)" ><rect x="0" y="0" width="9" height="1.3" fill="#111"/><rect x="1" y="2" width="7" height="3" fill="#8a8a8a"/><rect x="8" y="1" width="1.2" height="6" fill="#111"/><path d="M1,7.5 L6,7.5" stroke="#111" stroke-width="1" stroke-dasharray="1,1"/><path d="M6,5.5 L9.5,7.5 L6,9.5 Z" fill="#111"/></g>
<g transform="translate(809,33)" ><rect x="0" y="0" width="9" height="4" fill="#111"/><rect x="2.5" y="0" width="1" height="4" fill="#cce4f7"/><rect x="5.5" y="0" width="1" height="4" fill="#cce4f7"/><rect x="0" y="1.6" width="9" height="0.8" fill="#cce4f7"/><path d="M1,7.5 L6,7.5" stroke="#111" stroke-width="1" stroke-dasharray="1,1"/><path d="M6,5.5 L9.5,7.5 L6,9.5 Z" fill="#111"/></g>
<g transform="translate(1042,55)" ><circle cx="5.6" cy="5.8" r="3.3" fill="#f4f4f4" stroke="#9a9a9a" stroke-width="1.2"/><path d="M8,8.3 L11.3,11.5" stroke="#8a8a8a" stroke-width="1.9"/><path d="M4.3,5.8 L6.9,5.8 M5.6,4.5 L5.6,7.1" stroke="#b0b0b0" stroke-width="0.8"/></g>
<g transform="translate(1044,628)" ><path d="M3,1.5 L10.5,8 L5,11.5 Z" fill="url(#d)"/><path d="M3,1.5 L10.5,8 L5,11.5 Z" fill="#4a8a6a" opacity="0.35"/></g>
<path d="M11,62 L11,76.5 L14.3,73.6 L17,79.8 L19.6,78.6 L16.9,72.6 L21.3,72.3 Z" fill="#000"/>
<path d="M7.3,108 Q7.5,97 11.5,95.5 Q16,91.8 24,91.5" fill="none" stroke="#8a8a8a" stroke-width="1.2"/>
<rect x="8.5" y="92.5" width="6" height="6" fill="#2222e0" stroke="#1a1ac0" stroke-width="1"/>
<path d="M10,97.5 Q10.5,95 13,94" fill="none" stroke="#a8a8f0" stroke-width="1"/>
<rect x="24.5" y="89.5" width="4" height="4" fill="#d8d8fa" stroke="#5a5ad8" stroke-width="1"/>
<rect x="5.5" y="108.5" width="4" height="4" fill="#d8d8fa" stroke="#5a5ad8" stroke-width="1"/>
<path d="M13,98 L26,106.5 L21.5,111 Z" fill="#000"/>
<path d="M6,132.5 Q10,132 12,127 Q14.5,120.5 19.5,120.5 Q24.5,121 24.7,125.5 Q24.5,128 22.2,128 Q21,127.5 21.3,125.8 Q20.5,124 18.5,125.5 Q16.5,130 21,132.5 L28,132.5 L28,141.5 L6,141.5 Z" fill="url(#gWave)"/>
<path d="M6,132.5 Q10,132 12,127 Q14.5,120.5 19.5,120.5 Q24.5,121 24.7,125.5 Q24.5,128 22.2,128 Q21,127.5 21.3,125.8 Q20.5,124 18.5,125.5 Q16.5,130 21,132.5 L28,132.5" fill="none" stroke="#333" stroke-width="1.1"/>
<path d="M8,132.3 Q11.5,131.5 13.2,127.5 Q15.5,122 19.5,122" fill="none" stroke="#eee" stroke-width="0.9"/>
<path d="M20.5,164.5 L25.3,168.6" stroke="#a8720c" stroke-width="6" stroke-linecap="round"/>
<path d="M20.6,164 L25.2,167.9" stroke="#f0b840" stroke-width="3.4" stroke-linecap="round"/>
<path d="M17,161.5 L19.5,164" stroke="#555" stroke-width="2.4"/>
<circle cx="13" cy="157" r="7.2" fill="url(#gBlue)" stroke="#2a3344" stroke-width="1.5"/>
<circle cx="13" cy="157" r="5.4" fill="#dfe8f4" opacity="0.65"/>
<g transform="translate(15,191) rotate(-30)"><rect x="-5.7" y="-9.5" width="11.4" height="19" fill="url(#gSalmon)" stroke="#222" stroke-width="1.2"/>
<path d="M-5.7,-7 L-2.5,-7 M-5.7,-4.5 L-3.5,-4.5 M-5.7,-2 L-2.5,-2 M-5.7,0.5 L-3.5,0.5 M-5.7,3 L-2.5,3 M-5.7,5.5 L-3.5,5.5 M-5.7,8 L-2.5,8" stroke="#222" stroke-width="1.1"/></g>
<rect x="7.6" y="211.6" width="18.8" height="18.8" fill="#fff" stroke="#111" stroke-width="1.2"/>
<rect x="9.2" y="213.2" width="15.6" height="15.6" fill="url(#gBlue)"/>
<path d="M18.2,239.3 L7.2,243.8 L7.8,256.7 L15.6,262 L27.2,258 L27.2,246.3 Z" fill="#9a9ad0" stroke="#3a3a6a" stroke-width="1.2" stroke-linejoin="round"/>
<path d="M18.2,239.8 L27,246.5 L27,257.8 L17,252.5 Z" fill="#d8d8f4"/>
<path d="M17,252.5 L27,257.8 L15.6,261.5 L8,256.5 Z" fill="#40409a"/>
<path d="M18.2,239.8 L17,252.5 L8,256.5 L7.5,244 Z" fill="#8c8cc8"/>
<path d="M18.2,239.3 L7.2,243.8 L7.8,256.7 L15.6,262 L27.2,258 L27.2,246.3 Z" fill="none" stroke="#3a3a6a" stroke-width="1.2" stroke-linejoin="round"/>
<circle cx="17" cy="281" r="9.3" fill="url(#gPink)" stroke="#1a1a1a" stroke-width="1.3"/>
<path d="M13,301 L5.5,306.7 L9,315.8 L19.5,313.5 L21.4,305 Z" fill="#f3efb6" stroke="#333" stroke-width="1.1" stroke-linejoin="round"/>
<path d="M20.6,304.8 L22.8,310.3 L28.4,311.8 L24.2,315.6 L24.4,321.4 L19.2,318.2 L13,319.4 L15.6,314.4 L12.2,310 L18,309.8 Z" fill="#f1e468" stroke="#333" stroke-width="1.1" stroke-linejoin="round"/>
<path d="M17.2,340.7 L17.5,340.8 L17.7,340.9 L18.0,341.1 L18.2,341.3 L18.4,341.5 L18.5,341.8 L18.7,342.1 L18.7,342.5 L18.8,342.8 L18.8,343.2 L18.7,343.6 L18.6,343.9 L18.4,344.3 L18.1,344.6 L17.8,345.0 L17.5,345.2 L17.1,345.4 L16.6,345.6 L16.2,345.7 L15.7,345.8 L15.2,345.8 L14.7,345.7 L14.1,345.5 L13.7,345.2 L13.2,344.9 L12.8,344.5 L12.4,344.0 L12.1,343.5 L11.9,342.9 L11.7,342.3 L11.6,341.6 L11.7,341.0 L11.8,340.3 L12.0,339.6 L12.4,339.0 L12.8,338.4 L13.3,337.9 L13.9,337.4 L14.6,337.0 L15.3,336.7 L16.1,336.5 L16.9,336.5 L17.7,336.6 L18.5,336.7 L19.3,337.0 L20.1,337.5 L20.8,338.0 L21.4,338.6 L21.9,339.3 L22.3,340.1 L22.7,340.9 L22.8,341.8 L23.0,342.8 L23.1,343.7 L23.0,344.7 L22.8,345.7 L22.4,346.7 L21.9,347.7 L21.2,348.6 L20.4,349.4 L19.5,350.1 L18.4,350.7 L17.2,351.1 L16.0,351.3 L14.7,351.3 L13.4,351.1 L12.2,350.8 L11.0,350.2 L9.8,349.5 L8.8,348.6 L7.9,347.5 L7.1,346.4 L6.5,345.1 L6.1,343.7 L5.9,342.3 L5.8,340.8 L6.0,339.3 L6.4,337.9 L6.9,336.4 L7.7,335.1 L8.7,333.9 L9.9,332.7 L11.2,331.8 L12.6,331.0 L14.2,330.5 L15.9,330.1 L17.6,330.2 L19.2,330.5 L20.8,331.1 L22.3,331.8 L23.7,332.8 L24.9,334.0 L26.0,335.3 L26.8,336.7 L27.5,338.2 L27.9,339.8 L28.1,341.5 L28.1,343.1 L28.0,344.8 L27.8,346.5 L27.3,348.2 L26.6,349.8" fill="none" stroke="#111" stroke-width="1.4" stroke-linejoin="round"/>
<path d="M6,361 L9.5,360.5 L7,368 L11.5,367.5 Q14,372 13,377 Q13.5,381.5 18,381.5 Q23.5,381 26,376" fill="none" stroke="#111" stroke-width="1.3"/>
<path d="M21.5,359.5 L27.5,365 L21,378 L16.5,380.5 L16.5,374.5 Z" fill="#f6e6a8" stroke="#222" stroke-width="1"/>
<path d="M21.5,359.5 L27.5,365 L25.5,369 L19,364.5 Z" fill="#f5a020"/>
<path d="M20.5,360.5 L18,365 L19.5,366" fill="#7ab030" stroke="#5a8a20" stroke-width="0.6"/>
<path d="M16.5,380.5 L16.6,376.5 L19.3,378.8 Z" fill="#111"/>
<path d="M6.5,391 L17.5,390.5 Q11,394 13.5,402 Q15.5,408.5 12,410.5" fill="none" stroke="#111" stroke-width="1.2"/>
<rect x="5.5" y="408.5" width="4" height="4" fill="#fff" stroke="#111" stroke-width="1.1"/>
<path d="M9.5,410.5 L15,411.3" stroke="#111" stroke-width="1"/><circle cx="16.3" cy="411.5" r="1.5" fill="#fff" stroke="#111" stroke-width="0.9"/>
<path d="M21.5,389.5 L28.5,395 L25.5,400.5 L19.5,396 Z" fill="#5a90c8" stroke="#1a3050" stroke-width="1"/>
<path d="M22.5,390.5 L25,392.3 L22,397 L20.3,395.7 Z" fill="#b8d4ee"/>
<path d="M19.8,397 L24.5,400.5 L22.5,403.5 L19,401 Z" fill="#f0e0a0" stroke="#333" stroke-width="0.8"/>
<path d="M19,401 L22.3,403.4 L18,409.5 Z" fill="#e8e8e8" stroke="#222" stroke-width="0.9"/>
<path d="M5,419.8 Q13.5,419.5 13,425.5 Q11,431 12,436 Q13.5,440.5 18.5,440 Q22.5,437.5 27.5,438.6 Q22,439.5 20,442.3 Q11.5,444.5 7.5,439.5 Q4.5,433.5 8.5,426.5 Q9,421.5 5,419.8 Z" fill="#111"/>
<path d="M20,420 L28.5,423.5 L26.8,428 L18.8,424.5 Z" fill="#68a8b8" stroke="#1a3038" stroke-width="0.8"/>
<path d="M19.2,424.6 L26.3,427.8 L25.5,429.5 L18.5,426.3 Z" fill="#c03838"/>
<path d="M18.3,426.5 L25.3,429.8 Q24,436 16,439.5 Q14.5,433 18.3,426.5 Z" fill="#f2d830" stroke="#222" stroke-width="1"/>
<path d="M16.3,439 L19.5,432.5" stroke="#222" stroke-width="0.9"/><circle cx="19.8" cy="431.7" r="1" fill="#222"/>
<path d="M6,470.5 L13.2,451.5 L18.3,451.5 L25.3,470.5 L20.3,470.5 L18.9,466.3 L12.4,466.3 L11,470.5 Z M13.6,462.6 L17.7,462.6 L15.7,456 Z" fill="#111" fill-rule="evenodd"/>
<path d="M24.3,450.5 L27.8,450.5 M26,450.5 L26,471.5 M24.3,471.5 L27.8,471.5" stroke="#222" stroke-width="0.9" fill="none"/>
<path d="M17.3,492 Q17,490.8 18.5,490.6 L23.5,490 Q25.2,490.2 25.8,492 L28.6,500.2 Q24,503.2 17,502 Q16.2,497 17.3,492 Z" fill="#4e9e30" stroke="#1a4a10" stroke-width="1"/>
<path d="M18.3,493.5 Q22,494 25.5,492.6 L27.6,499.8 Q23.5,502 18,501.2 Z" fill="#78c44e"/>
<path d="M19.5,500.8 L20.2,494" stroke="#c8f0a8" stroke-width="1.3"/>
<rect x="18.2" y="484.6" width="5.2" height="6" rx="2" fill="#e8e8e8" stroke="#222" stroke-width="1.3"/>
<circle cx="8.8" cy="481.8" r="1.1" fill="#111"/><circle cx="7.6" cy="486" r="1.1" fill="#111"/><circle cx="9.4" cy="490.6" r="1.2" fill="#111"/>
<circle cx="11.8" cy="484" r="0.8" fill="#333"/><circle cx="12.3" cy="487.6" r="0.8" fill="#333"/><circle cx="14.3" cy="485.6" r="0.7" fill="#555"/><circle cx="14.6" cy="489" r="0.7" fill="#555"/><circle cx="11.3" cy="481.3" r="0.7" fill="#444"/>
<g transform="translate(16.7,520.5) rotate(30)"><rect x="-5.3" y="-9.3" width="10.6" height="18.6" rx="1" fill="url(#gSalmon)" stroke="#222" stroke-width="1.3"/></g>
<ellipse cx="15.5" cy="560.5" rx="10.3" ry="2.3" fill="#a8d8b0" stroke="#1a4a28" stroke-width="1"/>
<path d="M8.5,546.5 Q10,555 13,559.5 L16.5,559 Q14.5,556 14.2,551 Z" fill="#a8d8b0" stroke="#1a4a28" stroke-width="0.9"/>
<path d="M8.5,546 L22,539.5 Q26.5,541.5 27.8,549 L16,556.5 Q11.5,553.5 8.5,546 Z" fill="#5a8ab8" stroke="#12202e" stroke-width="1.1"/>
<path d="M8.5,546 Q12,549.5 16,556.5 L18,555.3 Q14.5,548.5 10.5,545 Z" fill="#a8d0b8" stroke="#12202e" stroke-width="0.8"/>
<path d="M21,541 Q24.5,543.5 25.5,549.5" stroke="#9cc0e0" stroke-width="1.3" fill="none"/>
<path d="M11.8,545 Q11,540 13.3,539.8 Q15.5,540 15.5,543.2" fill="none" stroke="#12202e" stroke-width="1.1"/>
<rect x="6" y="570.5" width="21.5" height="20.5" fill="url(#gGreen)"/>
<path d="M11,577 L23.5,587" stroke="#1a3a1a" stroke-width="1.3"/>
<rect x="8.7" y="574" width="4" height="4" fill="#e8f4e8" stroke="#1a3a1a" stroke-width="1.2"/>
<rect x="21.3" y="585" width="4.2" height="4.2" fill="#fff" stroke="#1a3a1a" stroke-width="1.2"/>
<path d="M14.0,627.0 L16.5,629.5 L14.0,632.0 M18.7,627.0 L21.2,629.5 L18.7,632.0" fill="none" stroke="#66709f" stroke-width="1.5"/>
<path d="M1317.5,627.0 L1320,629.5 L1317.5,632.0 M1322.2,627.0 L1324.7,629.5 L1322.2,632.0" fill="none" stroke="#66709f" stroke-width="1.5"/>
<path d="M1314.5,61.5 L1324.0,61.5 L1328.0,65.5 L1328.0,77.0 L1314.5,77.0 Z" fill="#f6f6f6" stroke="#8a8a8a" stroke-width="1" stroke-linejoin="round"/><path d="M1324.0,61.5 L1324.0,65.5 L1328.0,65.5" fill="#fff" stroke="#8a8a8a" stroke-width="0.8"/>
<path d="M1313.6,101 L1313.6,89 Q1313.6,88.4 1314.3,88.4 L1319.5,88.4 L1320.6,90.4 L1327.2,90.4 Q1327.8,90.4 1327.8,91 L1327.8,101 Z" fill="#c4c8a0" stroke="#7a7a68" stroke-width="1"/>
<path d="M1314,101.2 L1315.6,95.3 L1329,95.3 L1327.6,101.2 Z" fill="#e4e6c8" stroke="#7a7a68" stroke-width="1"/>
<path d="M1315,92 L1326.5,92" stroke="#dfe2c2" stroke-width="1"/>
<path d="M1313.5,114.5 Q1313.5,113.5 1314.5,113.5 L1327.5,113.5 Q1328.5,113.5 1328.5,114.5 L1328.5,127.5 Q1328.5,128.5 1327.5,128.5 L1315,128.5 L1313.5,127 Z" fill="#4a72b8" stroke="#1e3a78" stroke-width="1"/>
<rect x="1315" y="114.3" width="12" height="7.2" fill="#f4f4f4"/><rect x="1315" y="114.3" width="12" height="2.4" fill="#e02020"/>
<rect x="1316" y="118" width="10" height="0.8" fill="#c8c8c8"/><rect x="1316" y="119.8" width="10" height="0.8" fill="#c8c8c8"/>
<rect x="1316.5" y="123" width="8.5" height="5" fill="#e0e0e0" stroke="#555" stroke-width="0.6"/><rect x="1318" y="124" width="2.4" height="3.2" fill="#3a5a98"/>
<rect x="1316.5" y="139.2" width="9" height="6.5" fill="#fafafa" stroke="#8a8a8a" stroke-width="0.9"/>
<path d="M1318,141.3 L1324,141.3 M1318,143.2 L1324,143.2" stroke="#c0c0c0" stroke-width="0.8"/>
<path d="M1313.7,148 Q1313.7,145.8 1315.5,145.8 L1326.5,145.8 Q1328.5,145.8 1328.5,148 L1328.5,153.5 Q1328.5,154.7 1327.3,154.7 L1315,154.7 Q1313.7,154.7 1313.7,153.5 Z" fill="#c8c8c8" stroke="#666" stroke-width="1"/>
<rect x="1316" y="150.2" width="10.3" height="2" fill="#8a8a8a" stroke="#555" stroke-width="0.5"/>
<rect x="1314.5" y="147" width="13.2" height="1.2" fill="#e8e8e8"/>
<rect x="1313" y="165" width="16" height="1" fill="#a8a8a8" />
<path d="M1317.8,177.5 L1325.3,177.5 L1328.8,181.0 L1328.8,192.3 L1317.8,192.3 Z" fill="#e6e6e6" stroke="#222" stroke-width="1.1" stroke-linejoin="round"/><path d="M1325.3,177.5 L1325.3,181.0 L1328.8,181.0" fill="#fff" stroke="#222" stroke-width="0.8800000000000001"/>
<path d="M1313,185.5 L1321,185.5" stroke="#000" stroke-width="1.3"/><path d="M1320.2,182.5 L1324,185.5 L1320.2,188.5 Z" fill="#000"/>
<path d="M1313.6,203.5 L1321.1,203.5 L1324.6,207.0 L1324.6,218.3 L1313.6,218.3 Z" fill="#e6e6e6" stroke="#222" stroke-width="1.1" stroke-linejoin="round"/><path d="M1321.1,203.5 L1321.1,207.0 L1324.6,207.0" fill="#fff" stroke="#222" stroke-width="0.8800000000000001"/>
<path d="M1319,211.3 L1326.5,211.3" stroke="#000" stroke-width="1.3"/><path d="M1325.5,208.3 L1329.4,211.3 L1325.5,214.3 Z" fill="#000"/>
<rect x="1313" y="229" width="16" height="1" fill="#a8a8a8" />
<path d="M1314.5,241.5 L1324.3,241.5 L1327.8,245.0 L1327.8,256.3 L1314.5,256.3 Z" fill="#fcfcfc" stroke="#8a8a8a" stroke-width="1" stroke-linejoin="round"/><path d="M1324.3,241.5 L1324.3,245.0 L1327.8,245.0" fill="#fff" stroke="#8a8a8a" stroke-width="0.8"/>
<path d="M1318.3,246.5 L1324,252.5 M1324,246.5 L1318.3,252.5" stroke="#e0607a" stroke-width="1.15"/>
<path d="M1314,267 L1324,267 L1328,271 L1328,282.5 L1314,282.5 Z" fill="url(#dg)" stroke="#777" stroke-width="0.8" stroke-dasharray="1,1"/>
<path d="M1314,267 L1324,267 L1328,271 L1328,282.5 L1314,282.5 Z" fill="#fff" opacity="0.3"/>
<path d="M1318,272 L1324,278 M1324,272 L1318,278" stroke="#8a4a4a" stroke-width="1.1"/>
<rect x="1313" y="293" width="16" height="1" fill="#a8a8a8" />
<path d="M1313.6,305.3 L1323.59,305.3 L1323.6,305.31 L1323.6,316.8 L1313.6,316.8 Z" fill="#fcfcfc" stroke="#a4a4a4" stroke-width="1" stroke-linejoin="round"/><path d="M1323.59,305.3 L1323.59,305.31 L1323.6,305.31" fill="#fff" stroke="#a4a4a4" stroke-width="0.8"/>
<path d="M1317.5,308.5 L1328.49,308.5 L1328.5,308.51 L1328.5,320.5 L1317.5,320.5 Z" fill="#fcfcfc" stroke="#909090" stroke-width="1" stroke-linejoin="round"/><path d="M1328.49,308.5 L1328.49,308.51 L1328.5,308.51" fill="#fff" stroke="#909090" stroke-width="0.8"/>
<path d="M1319.5,311.5 L1326.5,311.5 M1319.5,313.5 L1326.5,313.5 M1319.5,315.5 L1326.5,315.5 M1319.5,317.5 L1324,317.5" stroke="#a0a0a0" stroke-width="0.8"/>
<path d="M1314.8,331 Q1315,336.5 1319.8,340.5 L1321,339 Q1318.2,334 1314.8,331 Z" fill="#d8d8d8" stroke="#777" stroke-width="0.8"/>
<path d="M1327,331 Q1326.8,336.5 1322,340.5 L1320.8,339 Q1323.6,334 1327,331 Z" fill="#d8d8d8" stroke="#777" stroke-width="0.8"/>
<rect x="1313.5" y="340.5" width="6.6" height="6" rx="1.8" fill="#d89a1e" stroke="#8a5a08" stroke-width="1"/>
<rect x="1321.5" y="340.5" width="6.6" height="6" rx="1.8" fill="#d89a1e" stroke="#8a5a08" stroke-width="1"/>
<circle cx="1316.8" cy="343.6" r="1.2" fill="#f8e8b8" stroke="#8a5a08" stroke-width="0.6"/><circle cx="1324.8" cy="343.6" r="1.2" fill="#f8e8b8" stroke="#8a5a08" stroke-width="0.6"/>
<rect x="1314.3" y="358.3" width="13.6" height="14.2" rx="1.6" fill="#c48a20" stroke="#7a5008" stroke-width="1.1"/>
<rect x="1318.5" y="356.8" width="5.2" height="2.6" rx="0.8" fill="#8a8a8a" stroke="#555" stroke-width="0.6"/>
<rect x="1316.5" y="360.5" width="9.2" height="10.3" fill="#fafafa" stroke="#9a8a6a" stroke-width="0.5"/>
<path d="M1318,362.8 L1324,362.8 M1318,364.8 L1324,364.8 M1318,366.8 L1324,366.8 M1318,368.8 L1321.5,368.8" stroke="#b0b0b0" stroke-width="0.8"/>
<rect x="1313" y="383" width="16" height="1" fill="#a8a8a8" />
<path d="M1325.5,407.3 L1327.6,409.3" stroke="#000" stroke-width="3.2" stroke-linecap="round"/><circle cx="1320.5" cy="402.3" r="7" fill="url(#gBlue)" stroke="#111" stroke-width="1.4"/><circle cx="1320.5" cy="402.3" r="5.6" fill="#f2f5f9" opacity="0.8"/><rect x="1316" y="398.5" width="9" height="7" fill="#fff" stroke="#111" stroke-width="1" stroke-dasharray="1,1"/>
<path d="M1325.5,433.3 L1327.6,435.3" stroke="#000" stroke-width="3.2" stroke-linecap="round"/><circle cx="1320.5" cy="428.3" r="7" fill="url(#gBlue)" stroke="#111" stroke-width="1.4"/><circle cx="1320.5" cy="428.3" r="5.6" fill="#f2f5f9" opacity="0.8"/><rect x="1316.3" y="423.8" width="5.2" height="5.2" fill="#f0e070" stroke="#333" stroke-width="0.9"/><rect x="1319.6" y="427.2" width="5.2" height="5.2" fill="#f0e070" stroke="#333" stroke-width="0.9"/>
<path d="M1325.5,459.5 L1327.6,461.5" stroke="#000" stroke-width="3.2" stroke-linecap="round"/><circle cx="1320.5" cy="454.5" r="7" fill="url(#gBlue)" stroke="#111" stroke-width="1.4"/><circle cx="1320.5" cy="454.5" r="5.6" fill="#f2f5f9" opacity="0.8"/><rect x="1317.3" y="449.8" width="6.4" height="8.8" fill="url(#gBlue)" stroke="#222" stroke-width="1"/>
<rect x="1313" y="473" width="16" height="1" fill="#a8a8a8" />
<rect x="1313.6" y="485.8" width="9" height="9" fill="url(#gBlue)" stroke="#222" stroke-width="1.1"/><rect x="1316.6" y="488.5" width="12" height="12" fill="url(#gBlue)" stroke="#222" stroke-width="1.1"/>
<rect x="1313.6" y="511.5" width="9" height="9" fill="url(#gBlue)" stroke="#222" stroke-width="1.1"/><rect x="1316.6" y="514.2" width="12" height="12" fill="#e4e8ec" stroke="#222" stroke-width="1.1"/>
<path d="M1320.6,518.5 L1320.6,517.5 Q1320.6,515.8 1322.6,515.8 Q1324.6,515.8 1324.6,517.5 L1324.6,518.5" fill="none" stroke="#333" stroke-width="1"/><rect x="1319.3" y="518.5" width="6.6" height="4.6" fill="#f0e070" stroke="#333" stroke-width="0.9"/>
<rect x="1313.6" y="537.2" width="9" height="9" fill="url(#gBlue)" stroke="#222" stroke-width="1.1"/><rect x="1316.6" y="540" width="12" height="12" fill="#e4e8ec" stroke="#222" stroke-width="1.1"/>
<path d="M1319.8,544.5 L1319.8,543.8 Q1319.8,542 1321.8,542 Q1323.8,542 1323.8,543.6" fill="none" stroke="#333" stroke-width="1"/><rect x="1319.3" y="544.8" width="6.6" height="4.6" fill="#c8dca8" stroke="#333" stroke-width="0.9"/>
<rect x="1313" y="563" width="16" height="1" fill="#a8a8a8" />
<rect x="1316.5" y="581.5" width="8" height="7" fill="#c8d0dc" stroke="#444" stroke-width="1"/>
<circle cx="1323.3" cy="580.3" r="3.9" fill="#c8ccd4" stroke="#555" stroke-width="1"/>
<rect x="1313" y="575" width="2" height="2" fill="#000"/><rect x="1327" y="575" width="2" height="2" fill="#000"/><rect x="1313" y="589" width="2" height="2" fill="#000"/><rect x="1327" y="589" width="2" height="2" fill="#000"/>
<rect x="1338.5" y="56.5" width="25" height="24" fill="#cce4f7" stroke="#b5d7f3" stroke-width="1"/>
<path d="M1347.5,65.6 L1353.5,71.6" stroke="#000" stroke-width="1.3"/><path d="M1354.6,72.7 L1350.3,71.5 L1353.4,68.4 Z" fill="#000"/><path d="M1345.8,60.9 L1348.8,63.9 L1345.8,66.9 L1342.8,63.9 Z" fill="#7070f0" stroke="#2020c8" stroke-width="1.1"/><path d="M1356,71.2 L1358.9,74.1 L1356,77.0 L1353.1,74.1 Z" fill="#78b088" stroke="#2a7a48" stroke-width="1.1"/>
<rect x="1343" y="87" width="16" height="1" fill="#a8a8a8" />
<path d="M1347.5,103.7 L1353.5,109.7" stroke="#000" stroke-width="1.3"/><path d="M1354.6,110.8 L1350.3,109.6 L1353.4,106.5 Z" fill="#000"/><path d="M1345.8,99 L1348.8,102 L1345.8,105 L1342.8,102 Z" fill="#7070f0" stroke="#2020c8" stroke-width="1.1"/><path d="M1356,109.3 L1358.9,112.2 L1356,115.1 L1353.1,112.2 Z" fill="#78b088" stroke="#2a7a48" stroke-width="1.1"/>
<path d="M1343.5,138.5 L1357,138.5" stroke="#666" stroke-width="1" stroke-dasharray="1.5,1.5"/><path d="M1356.5,129 L1356.5,138" stroke="#666" stroke-width="1" stroke-dasharray="1,1.5"/>
<path d="M1343.5,163.5 L1353,163.5" stroke="#666" stroke-width="1" stroke-dasharray="1.5,1.5"/><path d="M1356.5,151 L1356.5,160" stroke="#666" stroke-width="1" stroke-dasharray="1,1.5"/><path d="M1356.3,160.6 L1359.4,163.7 L1356.3,166.8 L1353.2,163.7 Z" fill="url(#d)" stroke="#5a6a5a" stroke-width="0.7"/>
<path d="M1344,189.5 L1356,189.5" stroke="#222" stroke-width="1" stroke-dasharray="1.5,1"/><path d="M1356,183.5 L1356,189" stroke="#666" stroke-width="1" stroke-dasharray="1,1.5"/><path d="M1355.8,177.3 L1358.6,180.4 L1355.8,183.5 L1353,180.4 Z" fill="url(#d)" stroke="#5a6a5a" stroke-width="0.7"/>
<path d="M1343.5,215.5 L1356,215.5" stroke="#111" stroke-width="1.2" stroke-dasharray="1.5,1"/><path d="M1355.5,203 L1355.5,215" stroke="#111" stroke-width="1.2" stroke-dasharray="2,1.5"/><path d="M1346.3,204.8 L1348.5,207 L1346.3,209.2 L1344.1,207 Z" fill="url(#d)" stroke="#5a6a5a" stroke-width="0.7"/>
<rect x="1343" y="229" width="16" height="1" fill="#a8a8a8" />
<rect x="1338.5" y="236.5" width="25" height="24" fill="#cce4f7" stroke="#b5d7f3" stroke-width="1"/>
<path d="M1347.5,245.6 L1353.5,251.6" stroke="#000" stroke-width="1.3"/><path d="M1354.6,252.70000000000002 L1350.3,251.5 L1353.4,248.4 Z" fill="#000"/><path d="M1345.8,240.9 L1348.8,243.9 L1345.8,246.9 L1342.8,243.9 Z" fill="#7070f0" stroke="#2020c8" stroke-width="1.1"/><path d="M1356,251.20000000000002 L1358.9,254.1 L1356,257.0 L1353.1,254.1 Z" fill="#78b088" stroke="#2a7a48" stroke-width="1.1"/>
<path d="M1344,269 Q1351.8,270 1352.8,279.8 Q1357,280.5 1358.2,275" fill="none" stroke="#3a7a3a" stroke-width="1.5" stroke-linejoin="round"/>
<path d="M1344,307.5 L1358.5,293.5 M1343.8,304.5 L1358.5,297.2" stroke="#444" stroke-width="1" fill="none"/><circle cx="1350.8" cy="300.7" r="2" fill="#4a8a5a" stroke="#2a6a3a" stroke-width="0.7"/>
<path d="M1344.3,320 Q1352.5,321.5 1353.5,330.5" fill="none" stroke="#666" stroke-width="1.1"/><path d="M1352,333.5 Q1356.5,332 1358.3,327" fill="none" stroke="#4a7a5a" stroke-width="1.4"/><path d="M1351,328.9 L1353.9,331.8 L1351,334.7 L1348.1,331.8 Z" fill="#6aa87a" stroke="#2a7a48" stroke-width="1"/>
<path d="M1344.3,346 Q1349,345.5 1351.5,349.5 Q1354,353 1351.8,357.5 Q1356.5,358.5 1358.2,353" fill="none" stroke="#666" stroke-width="1.1"/><rect x="1348" y="346" width="4.2" height="4.2" fill="#6aa87a" stroke="#2a7a48" stroke-width="1"/>
<path d="M1345,384 L1358,373" stroke="#888" stroke-width="0.8"/><path d="M1345.3,379.5 L1348.3,386.5 M1347.7,378.2 L1350,384.5 M1354,372.5 L1356.5,379 M1356.3,371 L1358.7,377.2" stroke="#d02030" stroke-width="1.1"/><circle cx="1351.3" cy="378.6" r="2" fill="#4a9a6a" stroke="#2a7a48" stroke-width="0.7"/>
<rect x="1343" y="397" width="16" height="1" fill="#a8a8a8" />
<rect x="1338.5" y="404.5" width="25" height="24" fill="#cce4f7" stroke="#b5d7f3" stroke-width="1"/>
<path d="M1347.5,413.5 L1353.5,419.5" stroke="#000" stroke-width="1.3"/><path d="M1354.6,420.6 L1350.3,419.40000000000003 L1353.4,416.3 Z" fill="#000"/><path d="M1345.8,408.8 L1348.8,411.8 L1345.8,414.8 L1342.8,411.8 Z" fill="#7070f0" stroke="#2020c8" stroke-width="1.1"/><path d="M1356,419.1 L1358.9,422.0 L1356,424.90000000000003 L1353.1,422.0 Z" fill="#78b088" stroke="#2a7a48" stroke-width="1.1"/>
<path d="M1355.5,435 L1355.5,447.5 L1343,447.5" fill="none" stroke="#707070" stroke-width="1"/><circle cx="1348.2" cy="440.5" r="1.7" fill="#a8d0a8" stroke="#3a8a4a" stroke-width="1"/>
<path d="M1343.5,474.2 L1356,474.2" stroke="#222" stroke-width="1.2" stroke-dasharray="1.5,1"/><path d="M1355.5,462 L1355.5,474" stroke="#222" stroke-width="1.2" stroke-dasharray="2,1.5"/><path d="M1344.8,466.8 L1351.4,466.8 M1348.1,463.5 L1348.1,470.2" stroke="#333" stroke-width="1.2"/>
<path d="M1344.5,499 L1349.3,487 L1353.7,487 L1358.5,499 L1355,499 L1354.1,496.4 L1348.9,496.4 L1348,499 Z M1349.9,493.8 L1353.1,493.8 L1351.5,489.6 Z" fill="#111" fill-rule="evenodd"/><path d="M1346.5,500.3 L1359,500.3" stroke="#3a8a4a" stroke-width="1.3"/><path d="M1345.6,497.8 L1348,500.2 L1345.6,502.6 L1343.2,500.2 Z" fill="#a8d8a8" stroke="#2a7a38" stroke-width="0.9"/>
<rect x="1343" y="513" width="16" height="1" fill="#a8a8a8" />
<rect x="1345.5" y="525.6" width="10.6" height="13.6" fill="url(#gGray)" stroke="#222" stroke-width="1.2"/>
<rect x="1338.5" y="546.5" width="25" height="24" fill="#cce4f7" stroke="#b5d7f3" stroke-width="1"/>
<path d="M1344.5,550.5 L1344.5,567 M1348.5,550.5 L1348.5,567 M1352.5,550.5 L1352.5,567 M1356.5,550.5 L1356.5,567 M1342.5,553.7 L1358.5,553.7 M1342.5,558.7 L1358.5,558.7 M1342.5,563.7 L1358.5,563.7" stroke="#1616c0" stroke-width="1.5" fill="none"/>
<rect x="1338.5" y="572.0" width="25" height="24" fill="#cce4f7" stroke="#b5d7f3" stroke-width="1"/>
<path d="M1343.5,578.5 L1343.5,593.5 M1355.8,578.5 L1355.8,593.5 M1349.3,593.5 L1354,578.5" stroke="#1414c0" stroke-width="1.3" fill="none"/>
<rect x="1264.5" y="61.5" width="10.5" height="10.3" rx="2" fill="#fafafa" stroke="#666" stroke-width="1.1"/><path d="M1266.7,66.5 L1272,64.1 L1272,68.9 Z" fill="#5a5a5a"/>
<rect x="1286.5" y="61.5" width="10.5" height="10.3" rx="2" fill="#fafafa" stroke="#666" stroke-width="1.1"/><path d="M1288.8,63.7 L1294.7,69.6 M1294.7,63.7 L1288.8,69.6" stroke="#5a5a5a" stroke-width="2"/>
<path d="M1085,159 L1089,159 L1089,164 L1094,164 L1094,168 L1089,168 L1089,173 L1085,173 L1085,168 L1080,168 L1080,164 L1085,164 Z" fill="url(#d)"/><path d="M1085,159 L1089,159 L1089,164 L1094,164 L1094,168 L1089,168 L1089,173 L1085,173 L1085,168 L1080,168 L1080,164 L1085,164 Z" fill="#88aacc" opacity="0.4"/>
<rect x="1113" y="164" width="14" height="4" fill="url(#d)"/><rect x="1113" y="164" width="14" height="4" fill="#88aacc" opacity="0.4"/>
<path d="M1247.5,159 L1253.5,165.5 L1251,165.5 L1251,172 L1244,172 L1244,165.5 L1241.5,165.5 Z" fill="url(#d)"/><path d="M1247.5,159 L1253.5,165.5 L1251,165.5 L1251,172 L1244,172 L1244,165.5 L1241.5,165.5 Z" fill="#a8d088" opacity="0.45"/>
<path d="M1277,159 L1284,159 L1284,165.5 L1286.5,165.5 L1280.5,171.5 L1274.5,165.5 L1277,165.5 Z" fill="url(#d)"/><path d="M1277,159 L1284,159 L1284,165.5 L1286.5,165.5 L1280.5,171.5 L1274.5,165.5 L1277,165.5 Z" fill="#a8d088" opacity="0.45"/>
<path d="M196,691.5 Q200.5,687.8 205,691.5 Q200.5,695.3 196,691.5 Z" fill="#fff" stroke="#111" stroke-width="1"/>
<circle cx="200.5" cy="691.7" r="2" fill="#000"/>
<path d="M197,689.3 L196.2,687.8 M198.7,688.5 L198.4,686.9 M200.5,688.2 L200.5,686.7 M202.3,688.5 L202.8,686.9 M204,689.3 L204.9,687.9" stroke="#111" stroke-width="0.9"/>
<path d="M196.5,692.5 Q200.5,695.6 204.5,692.5" fill="none" stroke="#111" stroke-width="1.2"/>
<rect x="1361" y="701" width="2" height="2" fill="#bcbcbc"/>
<rect x="1357" y="701" width="2" height="2" fill="#bcbcbc"/>
<rect x="1353" y="701" width="2" height="2" fill="#bcbcbc"/>
<rect x="1361" y="697" width="2" height="2" fill="#bcbcbc"/>
<rect x="1357" y="697" width="2" height="2" fill="#bcbcbc"/>
<rect x="1361" y="693" width="2" height="2" fill="#bcbcbc"/>
<rect x="1064" y="54.7" width="240.5" height="1.5" fill="#000"/><rect x="1064" y="54.7" width="1.5" height="587.5" fill="#000"/>
</svg>
</body></html>
